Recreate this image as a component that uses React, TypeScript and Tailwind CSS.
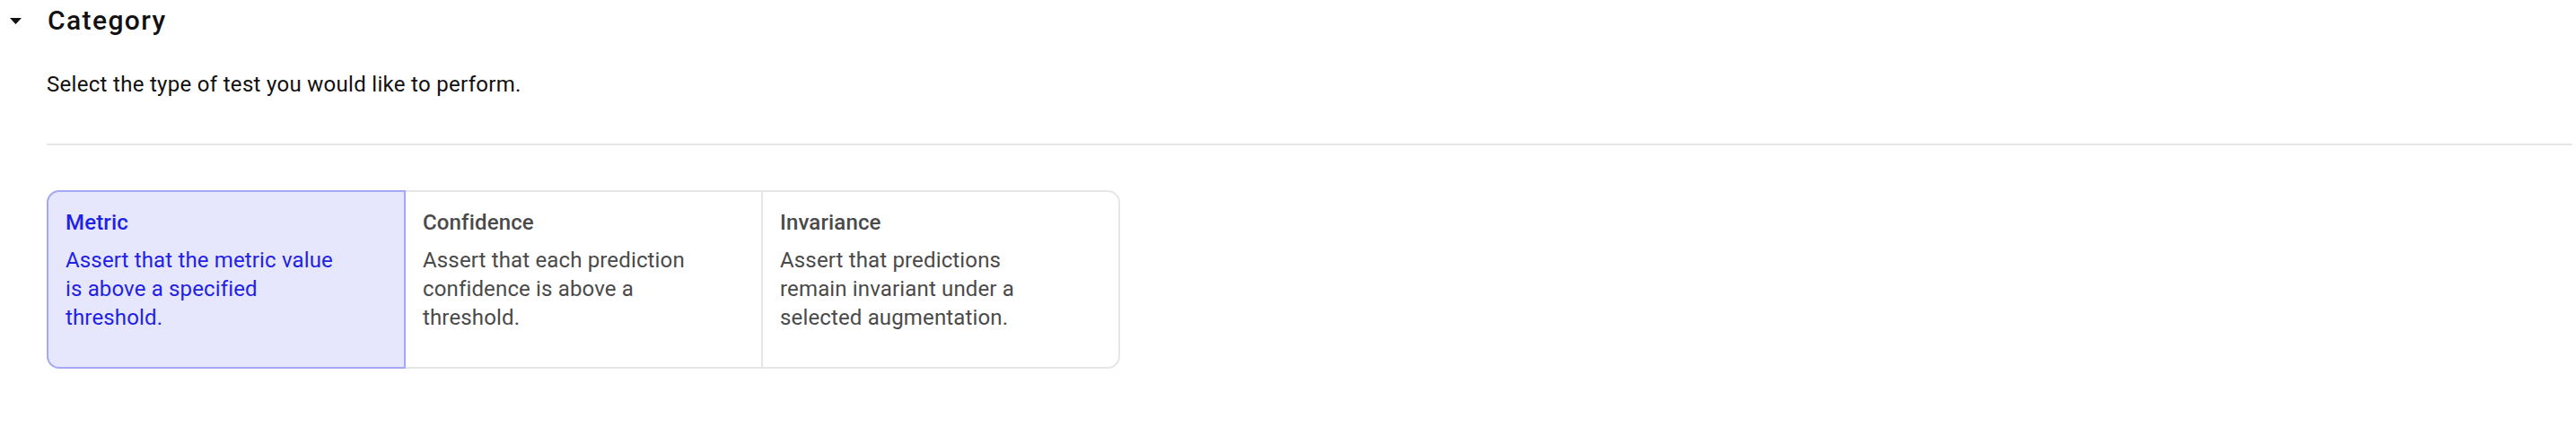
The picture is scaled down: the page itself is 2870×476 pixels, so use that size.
import React from "react";

const options = [
  {
    title: "Metric",
    text: "Assert that the metric value is above a specified threshold.",
  },
  {
    title: "Confidence",
    text: "Assert that each prediction confidence is above a threshold.",
  },
  {
    title: "Invariance",
    text: "Assert that predictions remain invariant under a selected augmentation.",
  },
];

export default function App() {
  const selected = 0;

  return (
    <div className="w-[2870px] h-[476px] bg-white font-['Roboto',sans-serif] pr-[4px]">
      <div className="flex items-center pt-[5px]">
        <div className="w-[53px] pl-[11px] flex">
          <svg width="13" height="7" viewBox="0 0 13 7">
            <path d="M0 0 L13 0 L6.5 7 Z" fill="#111" />
          </svg>
        </div>
        <h2 className="text-[30px] leading-[36px] font-medium tracking-[1.4px] text-[#111]">Category</h2>
      </div>

      <div className="pl-[52px]">
        <p className="mt-[37px] text-[24px] leading-[32px] tracking-[0.3px] text-[#111]">
          Select the type of test you would like to perform.
        </p>

        <div className="mt-[50px] h-[2px] bg-[#e6e6e6]" />

        <div className="mt-[50px] flex">
          {options.map((o, i) => {
            const on = i === selected;
            return (
              <button
                key={o.title}
                className={
                  "relative w-[400px] text-left border-2 pt-[18px] pb-[39px] px-[19px] tracking-[0.15px] " +
                  (i > 0 ? "-ml-[2px] " : "") +
                  (i === 0 ? "rounded-l-[14px] " : "") +
                  (i === options.length - 1 ? "rounded-r-[14px] " : "") +
                  (on
                    ? "z-10 bg-[#e6e7fc] border-[#a5a8f4] text-[#1f22e6]"
                    : "bg-white border-[#e6e6e6] text-[#4a4a4a]")
                }
              >
                <div className="text-[24px] leading-[32px] font-medium">{o.title}</div>
                <div className="mt-[10px] max-w-[310px] text-[24px] leading-[32px]">{o.text}</div>
              </button>
            );
          })}
        </div>
      </div>
    </div>
  );
}
